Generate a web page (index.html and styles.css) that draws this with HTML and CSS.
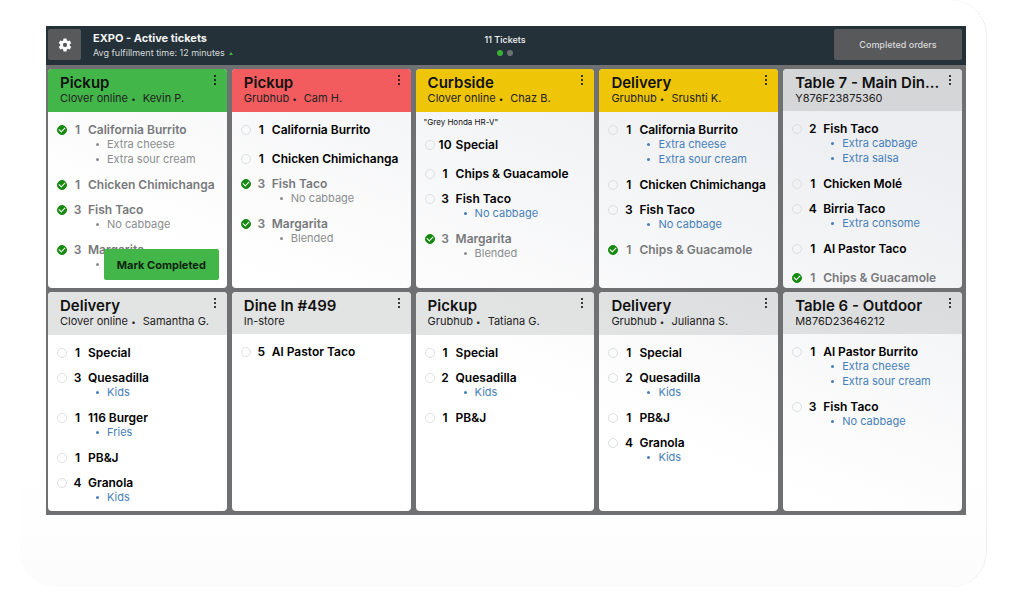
FILE: index.html
```html
<!DOCTYPE html>
<html lang="en">
<head>
    <meta charset="UTF-8">
    <meta name="viewport" content="width=device-width, initial-scale=1.0">
    <title>EXPO - Active tickets</title>
    <link rel="stylesheet" href="styles.css">
</head>
<body>

    <!-- Shared icons -->
    <svg class="icon-defs" aria-hidden="true">
        <symbol id="icon-more" viewBox="0 0 4 12">
            <circle cx="2" cy="2" r="1.1"/>
            <circle cx="2" cy="6" r="1.1"/>
            <circle cx="2" cy="10" r="1.1"/>
        </symbol>
    </svg>

    <div class="device">
        <div class="screen">

            <header class="topbar">
                <div class="topbar-left">
                    <button class="settings" aria-label="Settings">
                        <svg viewBox="0 0 24 24" width="16" height="16">
                            <path fill="currentColor" fill-rule="evenodd" d="M19.14 12.94c.04-.3.06-.61.06-.94s-.02-.64-.07-.94l2.03-1.58a.49.49 0 0 0 .12-.61l-1.92-3.32a.49.49 0 0 0-.59-.22l-2.39.96a7 7 0 0 0-1.62-.94l-.36-2.54a.48.48 0 0 0-.48-.41h-3.84a.48.48 0 0 0-.47.41l-.36 2.54a7.3 7.3 0 0 0-1.62.94l-2.39-.96a.49.49 0 0 0-.59.22L2.74 8.87a.48.48 0 0 0 .12.61l2.03 1.58a6 6 0 0 0 0 1.88l-2.03 1.58a.49.49 0 0 0-.12.61l1.92 3.32c.12.22.37.29.59.22l2.39-.96c.5.38 1.03.7 1.62.94l.36 2.54c.05.24.24.41.48.41h3.84c.24 0 .44-.17.47-.41l.36-2.54a7 7 0 0 0 1.62-.94l2.39.96c.22.08.47 0 .59-.22l1.92-3.32a.48.48 0 0 0-.12-.61zM12 15.2a3.2 3.2 0 1 1 0-6.4 3.2 3.2 0 0 1 0 6.4z"/>
                        </svg>
                    </button>
                    <div class="heading">
                        <h1>EXPO - Active tickets</h1>
                        <p>Avg fulfillment time: 12 minutes <span class="trend-up"></span></p>
                    </div>
                </div>
                <div class="pager">
                    <span>11 Tickets</span>
                    <div class="dots">
                        <span class="dot active"></span>
                        <span class="dot"></span>
                    </div>
                </div>
                <div class="topbar-right">
                    <button class="completed-orders">Completed orders</button>
                </div>
            </header>

            <main class="board">

                <section class="ticket">
                    <div class="ticket-header green">
                        <h2>Pickup</h2>
                        <p>Clover online <span class="sep">•</span> Kevin P.</p>
                        <button class="more" aria-label="More"><svg><use href="#icon-more"/></svg></button>
                    </div>
                    <ul class="items">
                        <li class="done">
                            <label><input type="checkbox" checked><span class="qty">1</span><span>California Burrito</span></label>
                            <ul class="mods"><li>Extra cheese</li><li>Extra sour cream</li></ul>
                        </li>
                        <li class="done">
                            <label><input type="checkbox" checked><span class="qty">1</span><span>Chicken Chimichanga</span></label>
                        </li>
                        <li class="done">
                            <label><input type="checkbox" checked><span class="qty">3</span><span>Fish Taco</span></label>
                            <ul class="mods"><li>No cabbage</li></ul>
                        </li>
                        <li class="done">
                            <label><input type="checkbox" checked><span class="qty">3</span><span>Margarita</span></label>
                            <ul class="mods"><li></li></ul>
                        </li>
                    </ul>
                    <button class="mark-completed">Mark Completed</button>
                </section>

                <section class="ticket">
                    <div class="ticket-header red">
                        <h2>Pickup</h2>
                        <p>Grubhub <span class="sep">•</span> Cam H.</p>
                        <button class="more" aria-label="More"><svg><use href="#icon-more"/></svg></button>
                    </div>
                    <ul class="items">
                        <li class="spaced">
                            <label><input type="checkbox"><span class="qty">1</span><span>California Burrito</span></label>
                        </li>
                        <li>
                            <label><input type="checkbox"><span class="qty">1</span><span>Chicken Chimichanga</span></label>
                        </li>
                        <li class="done">
                            <label><input type="checkbox" checked><span class="qty">3</span><span>Fish Taco</span></label>
                            <ul class="mods"><li>No cabbage</li></ul>
                        </li>
                        <li class="done">
                            <label><input type="checkbox" checked><span class="qty">3</span><span>Margarita</span></label>
                            <ul class="mods"><li>Blended</li></ul>
                        </li>
                    </ul>
                </section>

                <section class="ticket">
                    <div class="ticket-header yellow">
                        <h2>Curbside</h2>
                        <p>Clover online <span class="sep">•</span> Chaz B.</p>
                        <button class="more" aria-label="More"><svg><use href="#icon-more"/></svg></button>
                    </div>
                    <p class="note">"Grey Honda HR-V"</p>
                    <ul class="items">
                        <li class="spaced">
                            <label><input type="checkbox"><span class="qty">10</span><span>Special</span></label>
                        </li>
                        <li>
                            <label><input type="checkbox"><span class="qty">1</span><span>Chips &amp; Guacamole</span></label>
                        </li>
                        <li>
                            <label><input type="checkbox"><span class="qty">3</span><span>Fish Taco</span></label>
                            <ul class="mods"><li>No cabbage</li></ul>
                        </li>
                        <li class="done">
                            <label><input type="checkbox" checked><span class="qty">3</span><span>Margarita</span></label>
                            <ul class="mods"><li>Blended</li></ul>
                        </li>
                    </ul>
                </section>

                <section class="ticket">
                    <div class="ticket-header yellow">
                        <h2>Delivery</h2>
                        <p>Grubhub <span class="sep">•</span> Srushti K.</p>
                        <button class="more" aria-label="More"><svg><use href="#icon-more"/></svg></button>
                    </div>
                    <ul class="items">
                        <li>
                            <label><input type="checkbox"><span class="qty">1</span><span>California Burrito</span></label>
                            <ul class="mods"><li>Extra cheese</li><li>Extra sour cream</li></ul>
                        </li>
                        <li>
                            <label><input type="checkbox"><span class="qty">1</span><span>Chicken Chimichanga</span></label>
                        </li>
                        <li>
                            <label><input type="checkbox"><span class="qty">3</span><span>Fish Taco</span></label>
                            <ul class="mods"><li>No cabbage</li></ul>
                        </li>
                        <li class="done">
                            <label><input type="checkbox" checked><span class="qty">1</span><span>Chips &amp; Guacamole</span></label>
                        </li>
                    </ul>
                </section>

                <section class="ticket">
                    <div class="ticket-header">
                        <h2>Table 7 - Main Din...</h2>
                        <p>Y876F23875360</p>
                        <button class="more" aria-label="More"><svg><use href="#icon-more"/></svg></button>
                    </div>
                    <ul class="items">
                        <li>
                            <label><input type="checkbox"><span class="qty">2</span><span>Fish Taco</span></label>
                            <ul class="mods"><li>Extra cabbage</li><li>Extra salsa</li></ul>
                        </li>
                        <li>
                            <label><input type="checkbox"><span class="qty">1</span><span>Chicken Molé</span></label>
                        </li>
                        <li>
                            <label><input type="checkbox"><span class="qty">4</span><span>Birria Taco</span></label>
                            <ul class="mods"><li>Extra consome</li></ul>
                        </li>
                        <li class="spaced">
                            <label><input type="checkbox"><span class="qty">1</span><span>Al Pastor Taco</span></label>
                        </li>
                        <li class="done">
                            <label><input type="checkbox" checked><span class="qty">1</span><span>Chips &amp; Guacamole</span></label>
                        </li>
                    </ul>
                </section>

                <section class="ticket">
                    <div class="ticket-header">
                        <h2>Delivery</h2>
                        <p>Clover online <span class="sep">•</span> Samantha G.</p>
                        <button class="more" aria-label="More"><svg><use href="#icon-more"/></svg></button>
                    </div>
                    <ul class="items">
                        <li>
                            <label><input type="checkbox"><span class="qty">1</span><span>Special</span></label>
                        </li>
                        <li>
                            <label><input type="checkbox"><span class="qty">3</span><span>Quesadilla</span></label>
                            <ul class="mods"><li>Kids</li></ul>
                        </li>
                        <li>
                            <label><input type="checkbox"><span class="qty">1</span><span>116 Burger</span></label>
                            <ul class="mods"><li>Fries</li></ul>
                        </li>
                        <li>
                            <label><input type="checkbox"><span class="qty">1</span><span>PB&amp;J</span></label>
                        </li>
                        <li>
                            <label><input type="checkbox"><span class="qty">4</span><span>Granola</span></label>
                            <ul class="mods"><li>Kids</li></ul>
                        </li>
                    </ul>
                </section>

                <section class="ticket">
                    <div class="ticket-header">
                        <h2>Dine In #499</h2>
                        <p>In-store</p>
                        <button class="more" aria-label="More"><svg><use href="#icon-more"/></svg></button>
                    </div>
                    <ul class="items">
                        <li>
                            <label><input type="checkbox"><span class="qty">5</span><span>Al Pastor Taco</span></label>
                        </li>
                    </ul>
                </section>

                <section class="ticket">
                    <div class="ticket-header">
                        <h2>Pickup</h2>
                        <p>Grubhub <span class="sep">•</span> Tatiana G.</p>
                        <button class="more" aria-label="More"><svg><use href="#icon-more"/></svg></button>
                    </div>
                    <ul class="items">
                        <li>
                            <label><input type="checkbox"><span class="qty">1</span><span>Special</span></label>
                        </li>
                        <li>
                            <label><input type="checkbox"><span class="qty">2</span><span>Quesadilla</span></label>
                            <ul class="mods"><li>Kids</li></ul>
                        </li>
                        <li>
                            <label><input type="checkbox"><span class="qty">1</span><span>PB&amp;J</span></label>
                        </li>
                    </ul>
                </section>

                <section class="ticket">
                    <div class="ticket-header">
                        <h2>Delivery</h2>
                        <p>Grubhub <span class="sep">•</span> Julianna S.</p>
                        <button class="more" aria-label="More"><svg><use href="#icon-more"/></svg></button>
                    </div>
                    <ul class="items">
                        <li>
                            <label><input type="checkbox"><span class="qty">1</span><span>Special</span></label>
                        </li>
                        <li>
                            <label><input type="checkbox"><span class="qty">2</span><span>Quesadilla</span></label>
                            <ul class="mods"><li>Kids</li></ul>
                        </li>
                        <li>
                            <label><input type="checkbox"><span class="qty">1</span><span>PB&amp;J</span></label>
                        </li>
                        <li>
                            <label><input type="checkbox"><span class="qty">4</span><span>Granola</span></label>
                            <ul class="mods"><li>Kids</li></ul>
                        </li>
                    </ul>
                </section>

                <section class="ticket">
                    <div class="ticket-header">
                        <h2>Table 6 - Outdoor</h2>
                        <p>M876D23646212</p>
                        <button class="more" aria-label="More"><svg><use href="#icon-more"/></svg></button>
                    </div>
                    <ul class="items">
                        <li>
                            <label><input type="checkbox"><span class="qty">1</span><span>Al Pastor Burrito</span></label>
                            <ul class="mods"><li>Extra cheese</li><li>Extra sour cream</li></ul>
                        </li>
                        <li>
                            <label><input type="checkbox"><span class="qty">3</span><span>Fish Taco</span></label>
                            <ul class="mods"><li>No cabbage</li></ul>
                        </li>
                    </ul>
                </section>

            </main>
        </div>
    </div>

</body>
</html>
```
FILE: styles.css
```css
* {
    box-sizing: border-box;
}

body {
    margin: 0;
    padding: 0 37px 13px 20px;
    background: #fff;
    color: #111;
    font-family: Inter, "Liberation Sans", sans-serif;
    font-size: 11px;
    line-height: 15px;
}

h1, h2, p, ul {
    margin: 0;
    padding: 0;
}

ul {
    list-style: none;
}

button {
    border: none;
    padding: 0;
    font-family: inherit;
    cursor: pointer;
}

.icon-defs {
    display: none;
}

/* Tablet body around the screen */
.device {
    padding: 26px 20px 72px 26px;
    border-right: 1px dotted #ddd;
    border-radius: 36px;
    background: linear-gradient(#fff 80%, #fcfcfc);
}

.screen {
    background: #6f7071;
}

/* Top bar */
.topbar {
    display: grid;
    grid-template-columns: 1fr auto 1fr;
    align-items: center;
    padding: 3px 4px 5px 2px;
    background: #243138;
    color: #f2f4f5;
}

.topbar-left {
    display: flex;
    align-items: center;
    gap: 12px;
}

.settings {
    display: flex;
    align-items: center;
    justify-content: center;
    width: 33px;
    height: 31px;
    border-radius: 2px;
    background: #58595b;
    color: #fff;
}

.heading h1 {
    font-size: 11px;
    line-height: 15px;
    font-weight: 700;
}

.heading p {
    font-size: 9px;
    line-height: 13px;
    color: #d5d9db;
}

.trend-up {
    display: inline-block;
    margin: 0 0 1px 2px;
    border: 2px solid transparent;
    border-top: 0;
    border-bottom: 3px solid #3fb53f;
}

.pager {
    padding-top: 3px;
    font-size: 9px;
    line-height: 13px;
    font-weight: 500;
    text-align: center;
}

.dots {
    display: flex;
    justify-content: center;
    gap: 4px;
    padding: 4px 0;
}

.dot {
    width: 6px;
    height: 6px;
    border-radius: 50%;
    background: #6b7073;
}

.dot.active {
    background: #3aae3a;
}

.topbar-right {
    display: flex;
    justify-content: flex-end;
}

.completed-orders {
    width: 128px;
    height: 31px;
    border-radius: 2px;
    background: #58595b;
    color: #d8d9da;
    font-size: 9px;
    font-weight: 500;
}

/* Ticket grid */
.board {
    display: grid;
    grid-template-columns: repeat(5, 1fr);
    gap: 4px 5px;
    padding: 4px 4px 4px 2px;
}

.ticket {
    position: relative;
    min-height: 219px;
    border-radius: 4px;
    overflow: hidden;
    background: linear-gradient(22deg, #fff 42%, #edeef1 82%) fixed;
}

.ticket-header {
    display: grid;
    grid-template-columns: 1fr auto;
    padding: 5px 9px 6px 12px;
    background: linear-gradient(22deg, #e2e3e3 48%, #d5d6d8 82%) fixed;
}

.ticket-header.green {
    background: #42b649;
}

.ticket-header.red {
    background: #f25c5e;
}

.ticket-header.yellow {
    background: #efc507;
}

.ticket-header h2 {
    font-size: 15px;
    line-height: 18px;
    font-weight: 600;
    white-space: nowrap;
}

.ticket-header p {
    grid-row: 2;
    grid-column: 1 / -1;
    line-height: 13px;
    color: #222;
    white-space: nowrap;
}

.sep {
    margin-right: 4px;
    font-size: 8px;
}

.more {
    grid-row: 1;
    grid-column: 2;
    display: flex;
    width: 5px;
    height: 14px;
    background: none;
}

.more svg {
    width: 4px;
    height: 12px;
    fill: #111;
}

.note {
    padding: 3px 8px 0;
    margin-bottom: -3px;
    font-size: 8px;
    line-height: 15px;
}

.items {
    display: flex;
    flex-direction: column;
    gap: 10px;
    padding: 10px 9px 2px;
}

.items .spaced {
    margin-bottom: 4px;
}

.items label {
    display: grid;
    grid-template-columns: 10px 21px 1fr;
    align-items: center;
    font-size: 12px;
    font-weight: 600;
    white-space: nowrap;
    color: #000;
}

.qty {
    text-align: center;
}

.items input {
    appearance: none;
    display: grid;
    place-items: center;
    width: 10px;
    height: 10px;
    margin: 0;
    border: 1px solid #dcdfe0;
    border-radius: 50%;
}

.items input:checked {
    border-color: #168a10;
    background: #168a10;
}

.items input:checked::before {
    content: "";
    width: 5px;
    height: 3px;
    margin-bottom: 1px;
    border: solid #fff;
    border-width: 0 0 1px 1px;
    transform: rotate(-45deg);
}

.mods li {
    display: flex;
    align-items: center;
    gap: 8px;
    min-height: 15px;
    padding-left: 39px;
    color: #4780b8;
}

.mods li::before {
    content: "";
    width: 3px;
    height: 3px;
    border-radius: 50%;
    background: currentColor;
}

.done label {
    color: #77797b;
}

.done .mods li {
    color: #8b8d8f;
}

/* Floats over the item list */
.mark-completed {
    position: absolute;
    right: 8px;
    bottom: 8px;
    width: 115px;
    height: 31px;
    border-radius: 2px;
    background: #42b649;
    color: #0c240d;
    font-size: 11px;
    font-weight: 700;
}

@media (max-width: 768px) {
    .board {
        grid-template-columns: repeat(2, 1fr);
    }
}
```
